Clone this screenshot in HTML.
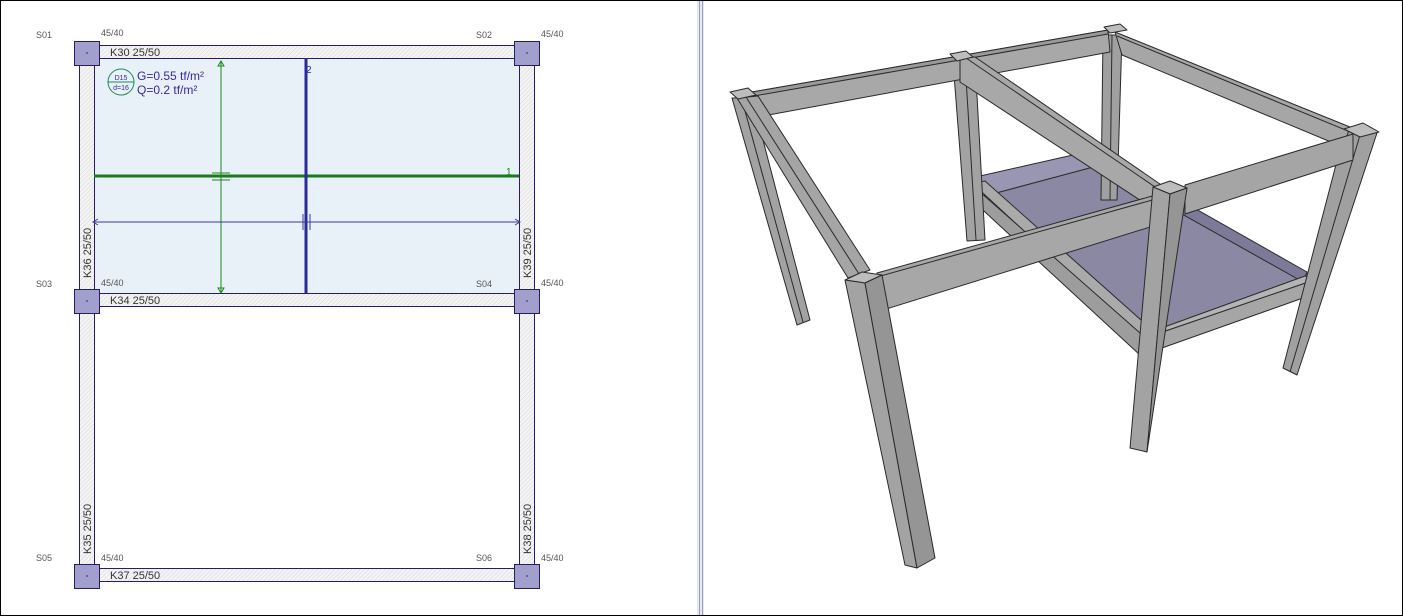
<!DOCTYPE html>
<html><head><meta charset="utf-8"><style>
html,body{margin:0;padding:0;background:#fff}
body{width:1403px;height:616px;overflow:hidden;position:relative;font-family:"Liberation Sans",sans-serif}
svg{position:absolute;left:0;top:0}
</style></head><body>
<svg width="1403" height="616" viewBox="0 0 1403 616" xmlns="http://www.w3.org/2000/svg">
<defs>
<pattern id="h" width="3" height="3" patternUnits="userSpaceOnUse" patternTransform="rotate(45)">
<rect width="3" height="3" fill="#f4f4f4"/><line x1="0" y1="0" x2="0" y2="3" stroke="#d6d6d6" stroke-width="1"/></pattern>
</defs>
<rect x="0.5" y="0.5" width="1402" height="615" fill="#fff" stroke="#000"/>
<rect x="697" y="1" width="7" height="614" fill="#e4e8f2"/>
<line x1="699.5" y1="1" x2="699.5" y2="615" stroke="#9aa0b0"/>
<line x1="702.5" y1="1" x2="702.5" y2="615" stroke="#9aa0b0"/>

<rect x="94" y="58" width="425" height="235" fill="#e8f0f8"/>
<g fill="url(#h)" stroke="#2a1a6a" stroke-width="1">
<rect x="99.5" y="45.5" width="415" height="13"/>
<rect x="99.5" y="293.5" width="415" height="13"/>
<rect x="99.5" y="568.5" width="415" height="13"/>
<rect x="79.5" y="65.5" width="15" height="224"/>
<rect x="79.5" y="313.5" width="15" height="251"/>
<rect x="519.5" y="65.5" width="15" height="224"/>
<rect x="519.5" y="313.5" width="15" height="251"/>
</g>
<g fill="#a19fcc" stroke="#2a1a6a" stroke-width="1">
<rect x="74.5" y="41.5" width="25" height="24"/>
<rect x="514.5" y="41.5" width="25" height="24"/>
<rect x="74.5" y="289.5" width="25" height="24"/>
<rect x="514.5" y="289.5" width="25" height="24"/>
<rect x="74.5" y="564.5" width="25" height="24"/>
<rect x="514.5" y="564.5" width="25" height="24"/>
</g>
<g fill="#7a5ab0"><rect x="86" y="52" width="2" height="2"/><rect x="526" y="52" width="2" height="2"/><rect x="86" y="300" width="2" height="2"/><rect x="526" y="300" width="2" height="2"/><rect x="86" y="575" width="2" height="2"/><rect x="526" y="575" width="2" height="2"/></g>

<line x1="94" y1="176" x2="519" y2="176" stroke="#1a7a1a" stroke-width="3"/>
<line x1="306" y1="58" x2="306" y2="293" stroke="#2a2a9a" stroke-width="3"/>
<line x1="221" y1="62" x2="221" y2="292" stroke="#1a8a1a" stroke-width="1"/>
<path d="M218 66 L221 61 L224 66 Z M218 288 L221 293 L224 288 Z" fill="none" stroke="#1a8a1a"/>
<line x1="212" y1="173" x2="230" y2="173" stroke="#1a8a1a"/><line x1="212" y1="180" x2="230" y2="180" stroke="#1a8a1a"/>
<line x1="94" y1="222" x2="519" y2="222" stroke="#3a3a9a" stroke-width="1"/>
<path d="M98 219 L93 222 L98 225 M515 219 L520 222 L515 225" fill="none" stroke="#3a3a9a"/>
<line x1="303" y1="214" x2="303" y2="230" stroke="#3a3a9a"/><line x1="310" y1="214" x2="310" y2="230" stroke="#3a3a9a"/>
<text x="506" y="175" font-size="10" fill="#1a8a1a">1</text>
<text x="306" y="73" font-size="10" fill="#2a2a9a">2</text>

<circle cx="121" cy="82" r="13" fill="none" stroke="#1a8a5a"/>
<line x1="108" y1="82" x2="134" y2="82" stroke="#1a8a5a"/>
<text x="121" y="80" font-size="7" fill="#3a2a9a" text-anchor="middle">D15</text>
<text x="121" y="90" font-size="7" fill="#3a2a9a" text-anchor="middle">d=16</text>
<text x="137" y="80" font-size="12" fill="#3a2a9a">G=0.55 tf/m²</text>
<text x="137" y="94" font-size="12" fill="#3a2a9a">Q=0.2 tf/m²</text>

<g font-size="9" fill="#555">
<text x="36" y="38">S01</text><text x="101" y="36">45/40</text><text x="476" y="38">S02</text><text x="541" y="37">45/40</text>
<text x="36" y="287">S03</text><text x="101" y="286">45/40</text><text x="476" y="287">S04</text><text x="541" y="286">45/40</text>
<text x="36" y="561">S05</text><text x="101" y="561">45/40</text><text x="476" y="561">S06</text><text x="541" y="561">45/40</text>
</g>
<g font-size="11" fill="#333">
<text x="110" y="56">K30 25/50</text>
<text x="110" y="304">K34 25/50</text>
<text x="110" y="579">K37 25/50</text>
<text transform="translate(91,278) rotate(-90)">K36 25/50</text>
<text transform="translate(531,278) rotate(-90)">K39 25/50</text>
<text transform="translate(91,554) rotate(-90)">K35 25/50</text>
<text transform="translate(531,554) rotate(-90)">K38 25/50</text>
</g>

<g stroke="#2a2a2a" stroke-width="1" stroke-linejoin="round">
<polygon points="978,178 1095,152 1310,276 1150,345" fill="#8a88a2"/>
<polygon points="980,176 1095,150 1097,166 985,196" fill="#9896b2"/>
<polygon points="1097,153 1307,272 1303,282 1100,168" fill="#7c7a98"/>
<polygon points="1103,35 1122,35 1117,200 1101,200" fill="#a0a0a0"/>
<line x1="1112" y1="35" x2="1110" y2="200"/>
<polygon points="972,183 985,181 1150,328 1140,338" fill="#aaaaaa"/>
<polygon points="972,185 1140,333 1140,355 972,200" fill="#9d9d9d"/>
<polygon points="1145,338 1317,279 1317,293 1145,354" fill="#a6a6a6"/>
<polygon points="1145,334 1305,276 1317,279 1145,338" fill="#b4b4b4"/>
<polygon points="732,98 752,98 810,320 797,325" fill="#a2a2a2"/>
<line x1="742" y1="100" x2="803" y2="322"/>
<polygon points="953,62 975,60 985,240 967,241" fill="#a2a2a2"/>
<line x1="965" y1="62" x2="976" y2="240"/>
<polygon points="1345,130 1377,133 1297,375 1283,368" fill="#a0a0a0"/>
<line x1="1360" y1="135" x2="1290" y2="372"/>
<polygon points="752,92 1108,30 1110,52 763,116" fill="#a8a8a8"/>
<polygon points="752,92 1108,30 1108,34 754,96" fill="#999"/>
<polygon points="1115,32 1350,127 1343,147 1122,55" fill="#a6a6a6"/>
<line x1="1117" y1="36" x2="1348" y2="131"/>
<polygon points="737,98 758,96 870,270 848,278" fill="#a5a5a5"/>
<line x1="746" y1="97" x2="859" y2="274"/>
<polygon points="960,58 975,57 1160,184 1152,208 960,82" fill="#a8a8a8"/>
<line x1="966" y1="58" x2="1158" y2="189"/>
<polygon points="1185,185 1353,134 1353,160 1185,214" fill="#a5a5a5"/>
<polygon points="877,273 1163,193 1163,223 883,310" fill="#a7a7a7"/>
<line x1="877" y1="277" x2="1163" y2="197"/>
<polygon points="730,92 748,88 756,95 738,99" fill="#bdbdbd"/>
<polygon points="950,54 966,51 973,57 957,61" fill="#bdbdbd"/>
<polygon points="1104,27 1120,24 1127,30 1110,33" fill="#bdbdbd"/>
<polygon points="1344,129 1363,123 1379,132 1360,137" fill="#bdbdbd"/>
<polygon points="1153,187 1170,181 1187,188 1170,194" fill="#bdbdbd"/>
<polygon points="1153,187 1170,194 1147,452 1130,448" fill="#a3a3a3"/>
<polygon points="1170,194 1187,188 1147,452" fill="#959595"/>
<polygon points="845,280 862,272 882,275 865,283" fill="#bdbdbd"/>
<polygon points="845,280 865,283 917,568 905,565" fill="#a3a3a3"/>
<polygon points="865,283 882,275 935,558 917,568" fill="#959595"/>
</g>
</svg>
</body></html>
